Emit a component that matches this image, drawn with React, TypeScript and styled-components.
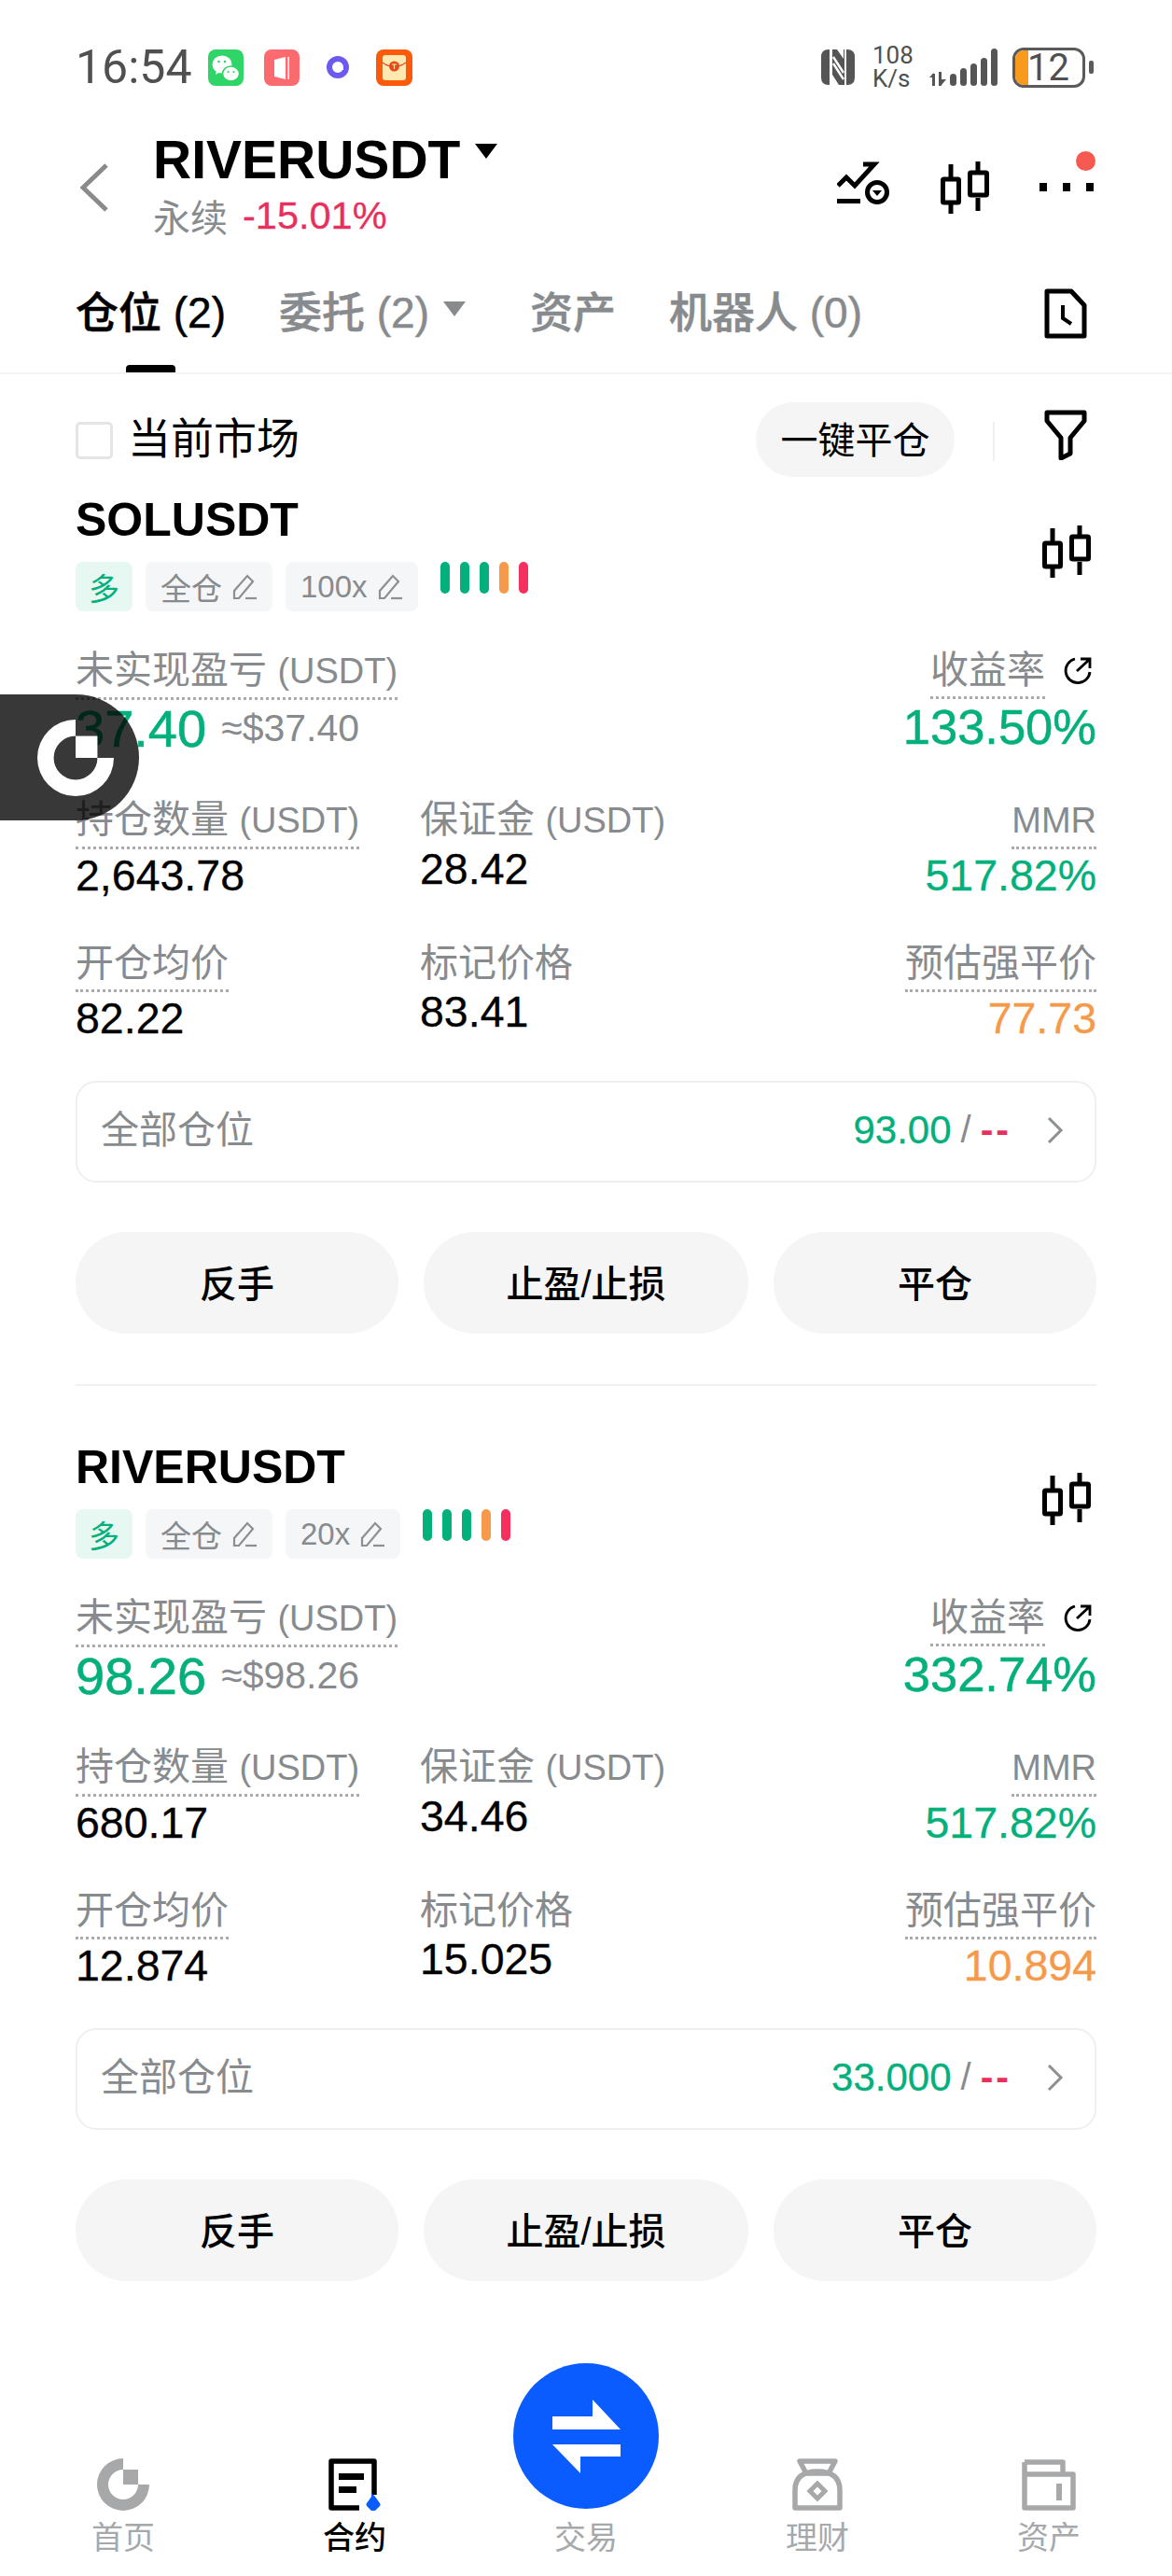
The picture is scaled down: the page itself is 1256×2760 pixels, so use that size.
import React from "react";
import styled, { createGlobalStyle } from "styled-components";

const FONT = `"Liberation Sans", "Noto Sans CJK SC", sans-serif`;
const GREEN = "#03b07c";
const RED = "#e7305e";
const ORANGE = "#f59a4a";
const GREY = "#888b8e";
const NAVGREY = "#a6a8aa";

const Global = createGlobalStyle`
  html, body { margin: 0; padding: 0; background: #fff; }
  * { box-sizing: border-box; }
  svg { display: block; flex: none; }
`;

const Page = styled.div`
  position: relative;
  width: 1256px;
  height: 2760px;
  overflow: hidden;
  background: #fff;
  font-family: ${FONT};
  color: #000;
  display: flex;
  flex-direction: column;
  & > * {
    flex: none;
  }
`;

/* status bar */
const StatusBar = styled.div`
  height: 144px;
  padding: 0 84px 0 81px;
  display: flex;
  align-items: center;
  justify-content: space-between;
`;
const StatusGroup = styled.div`
  display: flex;
  align-items: center;
`;
const Clock = styled.span`
  font-family: Roboto, sans-serif;
  font-size: 50px;
  line-height: 50px;
  color: #505050;
  margin-right: 16px;
  width: 126px;
`;
const NotifySlot = styled.span<{ $inset?: number }>`
  width: 60px;
  padding-left: ${(p) => p.$inset ?? 0}px;
  display: flex;
  justify-content: flex-start;
`;
const Speed = styled.div`
  width: 61px;
  margin-left: 19px;
  font-family: Roboto, sans-serif;
  font-size: 26px;
  line-height: 25px;
  color: #505050;
`;
const Battery = styled.div`
  position: relative;
  width: 78px;
  height: 43px;
  margin-left: 16px;
  border: 3px solid #5a5a5a;
  border-radius: 12px;
  display: flex;
  align-items: center;
  justify-content: flex-end;
  padding-right: 14px;
  font-family: Roboto, sans-serif;
  font-size: 40px;
  line-height: 37px;
  color: #505050;
`;
const BatteryFill = styled.span`
  position: absolute;
  left: 0;
  top: 0;
  bottom: 0;
  width: 14px;
  border-radius: 9px 0 0 9px;
  background: #f79a1e;
`;
const BatteryNub = styled.span`
  width: 5px;
  height: 14px;
  margin-left: 4px;
  border-radius: 2px;
  background: #5a5a5a;
`;

/* navigation */
const Nav = styled.div`
  height: 126px;
  padding: 0 82px 0 86px;
  display: flex;
  align-items: flex-start;
`;
const Back = styled.div`
  width: 78px;
  padding-top: 31px;
`;
const NavTitleCol = styled.div`
  flex: 1;
`;
const TitleRow = styled.div`
  display: flex;
  align-items: flex-start;
  height: 54px;
`;
const Title = styled.span`
  font-size: 57px;
  line-height: 54px;
  font-weight: 700;
`;
const TitleCaret = styled.span`
  width: 0;
  height: 0;
  margin: 10px 0 0 16px;
  border-left: 12px solid transparent;
  border-right: 12px solid transparent;
  border-top: 16px solid #000;
`;
const SubRow = styled.div`
  display: flex;
  align-items: center;
  margin-top: 8px;
  height: 50px;
`;
const SubLabel = styled.span`
  font-size: 40px;
  color: ${GREY};
  margin-right: 16px;
`;
const SubChange = styled.span`
  font-size: 41.5px;
  color: ${RED};
  -webkit-text-stroke: 0.3px ${RED};
`;
const NavIcons = styled.div`
  position: relative;
  display: flex;
  align-items: flex-start;
  gap: 54px;
  padding-top: 29px;
`;
const MoreDots = styled.div`
  display: flex;
  gap: 17px;
  margin-top: 23px;
  width: 60px;
`;
const MoreDot = styled.span`
  width: 8px;
  height: 9px;
  background: #000;
`;
const RedDot = styled.span`
  position: absolute;
  right: 0;
  top: 18px;
  width: 21px;
  height: 21px;
  border-radius: 50%;
  background: #f5594f;
`;

/* tabs */
const TabBar = styled.div`
  height: 131px;
  padding: 0 91px 0 81px;
  border-bottom: 2px solid #f4f4f4;
  display: flex;
  align-items: flex-start;
`;
const Tab = styled.div<{ $active?: boolean; $gap: number }>`
  position: relative;
  display: flex;
  align-items: center;
  height: 129px;
  padding-bottom: 8px;
  margin-right: ${(p) => p.$gap}px;
  font-size: 46px;
  font-weight: 500;
  -webkit-text-stroke: 0.5px currentColor;
  color: ${(p) => (p.$active ? "#000" : GREY)};
  white-space: pre;
`;
const TabMark = styled.span`
  position: absolute;
  left: 54px;
  bottom: 0;
  width: 53px;
  height: 8px;
  border-radius: 4px 4px 0 0;
  background: #000;
`;
const TabCaret = styled.span`
  width: 0;
  height: 0;
  margin-left: 15px;
  border-left: 12px solid transparent;
  border-right: 12px solid transparent;
  border-top: 16px solid ${GREY};
`;
const TabEnd = styled.div`
  margin-left: auto;
  padding-top: 39px;
`;

/* toolbar */
const Toolbar = styled.div`
  height: 131px;
  padding: 30px 91px 0 81px;
  display: flex;
  align-items: flex-start;
`;
const Check = styled.span`
  width: 40px;
  height: 40px;
  margin-top: 21px;
  border: 3px solid #e3e5e6;
  border-radius: 5px;
`;
const CheckLabel = styled.span`
  margin-left: 16px;
  margin-top: 9px;
  font-size: 46px;
  line-height: 60px;
  flex: 1;
`;
const CloseAll = styled.div`
  width: 213px;
  height: 80px;
  padding-bottom: 4px;
  border-radius: 40px;
  background: #f5f5f5;
  font-size: 40px;
  display: flex;
  align-items: center;
  justify-content: center;
`;
const VLine = styled.span`
  width: 2px;
  height: 42px;
  margin: 21px 53px 0 41px;
  background: #f0f0f0;
`;
const FilterWrap = styled.div`
  padding-top: 8px;
`;

/* position card */
const Card = styled.section<{ $divider?: boolean }>`
  margin: 0 81px;
  padding-bottom: ${(p) => (p.$divider ? 54 : 0)}px;
  ${(p) => p.$divider && "border-bottom: 2px solid #f2f2f2; margin-bottom: 62px;"}
`;
const CardHead = styled.div`
  display: flex;
  justify-content: space-between;
  align-items: flex-start;
`;
const Symbol = styled.div`
  font-size: 50px;
  line-height: 50px;
  font-weight: 700;
`;
const TagRow = styled.div`
  display: flex;
  align-items: flex-start;
  gap: 14px;
  margin-top: 20px;
`;
const Tag = styled.span<{ $long?: boolean }>`
  height: 53px;
  padding: 0 ${(p) => (p.$long ? 14 : 16)}px;
  border-radius: 8px;
  display: flex;
  align-items: center;
  gap: 10px;
  font-size: 33px;
  background: ${(p) => (p.$long ? "#e6f8f1" : "#f5f6f7")};
  color: ${(p) => (p.$long ? GREEN : GREY)};
`;
const Bars = styled.div`
  display: flex;
  gap: 11px;
  margin-left: 10px;
`;
const Bar = styled.span<{ $color: string }>`
  width: 10px;
  height: 34px;
  border-radius: 5px;
  background: ${(p) => p.$color};
`;
const CandleWrap = styled.div`
  margin-top: 31px;
  margin-right: 6px;
`;
const PnlRow = styled.div`
  display: flex;
  justify-content: space-between;
  margin-top: 39px;
`;
const Metrics = styled.div`
  display: grid;
  grid-template-columns: 369px 1fr auto;
  row-gap: 42px;
  margin-top: 44px;
`;
const Cell = styled.div<{ $right?: boolean }>`
  display: flex;
  flex-direction: column;
  align-items: ${(p) => (p.$right ? "flex-end" : "flex-start")};
`;
const Label = styled.span<{ $dotted?: boolean }>`
  font-size: 41px;
  line-height: 48px;
  color: ${GREY};
  padding-bottom: ${(p) => (p.$dotted ? 4 : 0)}px;
  ${(p) => p.$dotted && `border-bottom: 3px dotted #a9abad;`}
`;
const Unit = styled.span`
  font-size: 38px;
`;
const LabelRow = styled.div`
  display: flex;
  align-items: flex-start;
  gap: 19px;
`;
const RefreshWrap = styled.span`
  margin-top: 9px;
  margin-right: 5px;
`;
const Value = styled.span<{ $tone?: string }>`
  font-size: 46.5px;
  line-height: 56px;
  color: ${(p) => p.$tone ?? "#000"};
  -webkit-text-stroke: 0.3px ${(p) => p.$tone ?? "#000"};
`;
const BigValue = styled.span`
  font-size: 52.5px;
  line-height: 60px;
  color: ${GREEN};
  -webkit-text-stroke: 0.5px ${GREEN};
`;
const PnlLine = styled.div`
  display: flex;
  align-items: center;
  gap: 16px;
  height: 60px;
`;
const PnlBig = styled.span`
  font-size: 56px;
  color: ${GREEN};
  -webkit-text-stroke: 0.6px ${GREEN};
`;
const PnlFiat = styled.span`
  font-size: 41px;
  color: ${GREY};
`;
const AllRow = styled.div`
  height: 109px;
  margin-top: 39px;
  padding: 0 33px 4px 25px;
  border: 2px solid #efefef;
  border-radius: 22px;
  display: flex;
  align-items: center;
  font-size: 41px;
  color: ${GREY};
`;
const AllLabel = styled.span`
  flex: 1;
  margin-bottom: 8px;
`;
const AllQty = styled.span`
  color: ${GREEN};
  font-size: 42px;
  -webkit-text-stroke: 0.3px ${GREEN};
`;
const AllSep = styled.span`
  margin: 0 10px;
  font-size: 40px;
`;
const AllDash = styled.span`
  color: ${RED};
  font-weight: 700;
  letter-spacing: 3px;
  margin-right: 38px;
`;
const Actions = styled.div`
  display: grid;
  grid-template-columns: 346px 348px 346px;
  justify-content: space-between;
  margin-top: 53px;
`;
const Action = styled.div`
  height: 109px;
  padding-bottom: 4px;
  border-radius: 55px;
  background: #f5f5f5;
  font-size: 40px;
  font-weight: 500;
  display: flex;
  align-items: center;
  justify-content: center;
`;

/* floating handle */
const FloatHandle = styled.div`
  position: absolute;
  left: 0;
  top: 744px;
  width: 149px;
  height: 135px;
  border-radius: 0 68px 68px 0;
  background: rgba(0, 0, 0, 0.78);
  display: flex;
  align-items: center;
  padding-left: 40px;
`;

/* bottom nav */
const BottomNav = styled.nav`
  margin-top: auto;
  height: 228px;
  padding: 0 8px 21px;
  display: grid;
  grid-template-columns: repeat(5, 1fr);
  align-items: end;
`;
const NavItem = styled.div<{ $active?: boolean }>`
  display: flex;
  flex-direction: column;
  align-items: center;
  font-size: 34px;
  line-height: 40px;
  color: ${(p) => (p.$active ? "#000" : NAVGREY)};
  font-weight: ${(p) => (p.$active ? 500 : 400)};
`;
const NavIconBox = styled.div`
  height: 56px;
  margin-bottom: 9px;
  display: flex;
  align-items: center;
  justify-content: center;
`;
const SwapCircle = styled.div`
  width: 156px;
  height: 156px;
  margin-bottom: 11px;
  border-radius: 50%;
  background: #0a5cff;
  display: flex;
  align-items: center;
  justify-content: center;
`;

/* ---------- drawings ---------- */
const WeChat = () => (
  <svg width="38" height="39" viewBox="0 0 38 39">
    <rect width="38" height="39" rx="8" fill="#2fd566" />
    <ellipse cx="15" cy="16" rx="10.5" ry="9.5" fill="#fff" />
    <path d="M9 22l-1 5 5-3z" fill="#fff" />
    <ellipse cx="24.5" cy="26" rx="9" ry="8" fill="#fff" stroke="#2fd566" strokeWidth="1.5" />
    <circle cx="11.5" cy="13" r="1.3" fill="#2fd566" />
    <circle cx="18" cy="13" r="1.3" fill="#2fd566" />
    <circle cx="21.5" cy="24" r="1.1" fill="#2fd566" />
    <circle cx="27.5" cy="24" r="1.1" fill="#2fd566" />
  </svg>
);
const RedApp = () => (
  <svg width="38" height="39" viewBox="0 0 38 39">
    <rect width="38" height="39" rx="8" fill="#fb6a6e" />
    <path d="M11 11l12-3v24l-12-3z" fill="#fff" />
    <rect x="25.5" y="8" width="1.5" height="24" fill="#fff" />
  </svg>
);
const PurpleRing = () => (
  <svg width="24" height="24" viewBox="0 0 24 24">
    <circle cx="12" cy="12" r="9" fill="none" stroke="#6a5af0" strokeWidth="6" />
    <path d="M12 12h6v3h-6z" fill="#fff" />
  </svg>
);
const Envelope = () => (
  <svg width="39" height="39" viewBox="0 0 39 39">
    <rect width="39" height="39" rx="8" fill="#fa5a0a" />
    <rect x="7" y="6" width="25" height="27" rx="3" fill="#ffe9b0" />
    <path d="M7 14q12 9 25 0" fill="none" stroke="#e8491a" strokeWidth="1.2" />
    <circle cx="19.5" cy="18" r="5.5" fill="#e8491a" />
    <path d="M17 16h5M19.5 16v5" stroke="#ffe9b0" strokeWidth="1.2" />
  </svg>
);
const Nfc = () => (
  <svg width="36" height="38" viewBox="0 0 36 38">
    <path d="M8 0h1v38H8q-8 0-8-8V8q0-8 8-8z" fill="#555" />
    <path d="M27 0h1q8 0 8 8v22q0 8-8 8h-1z" fill="#555" />
    <path d="M12 0h5l7 10v-10h1v38h-6L12 27z" fill="#555" />
    <path d="M13 8l11 17M13 15l11 17" stroke="#fff" strokeWidth="2.4" />
  </svg>
);
const Signal = () => (
  <svg width="73" height="41" viewBox="0 0 73 41">
    <g fill="#555">
      <rect x="3" y="27" width="3" height="13" />
      <path d="M0 31l4.500-5v5z" />
      <rect x="10" y="25" width="3" height="15" />
      <path d="M13 33h5l-5 6z" />
      <rect x="22" y="27" width="7" height="13" rx="3.500" />
      <rect x="33" y="21" width="7" height="19" rx="3.500" />
      <rect x="44" y="16" width="7" height="24" rx="3.500" />
      <rect x="55" y="10" width="7" height="30" rx="3.500" />
      <rect x="66" y="0" width="7" height="40" rx="3.500" />
    </g>
  </svg>
);
const BackChevron = () => (
  <svg width="30" height="52" viewBox="0 0 30 52">
    <path d="M28 2L3 26l25 24" fill="none" stroke="#8a8a8a" strokeWidth="5" />
  </svg>
);
const AlertIcon = () => (
  <svg width="57" height="47" viewBox="0 0 57 47">
    <g fill="none" stroke="#000" strokeWidth="5">
      <path d="M1 26l9-9 9 9L40 3H28" />
      <circle cx="43" cy="33" r="10.500" />
    </g>
    <path d="M0 40h25v5H0z" fill="#000" />
    <path d="M38 31h10l-5 6z" fill="#000" />
  </svg>
);
const Candles = () => (
  <svg width="52" height="56" viewBox="0 0 52 56">
    <g fill="none" stroke="#000" strokeWidth="5">
      <path d="M11 3v14M11 45v11" />
      <rect x="2.500" y="19" width="17" height="25" rx="1" />
      <path d="M40 0v12M40 39v14" />
      <rect x="31.500" y="12" width="18" height="24" rx="1" />
    </g>
  </svg>
);
const FileClock = () => (
  <svg width="46" height="54" viewBox="0 0 46 54">
    <path d="M3 3h26l14 15v33H3z" fill="none" stroke="#000" strokeWidth="5" strokeLinejoin="round" />
    <path d="M20 18v14l9 6" fill="none" stroke="#000" strokeWidth="4" />
  </svg>
);
const Filter = () => (
  <svg width="46" height="54" viewBox="0 0 46 54">
    <path
      d="M3 3h40v9L28 30v17l-10 5V30L3 12z"
      fill="none"
      stroke="#000"
      strokeWidth="5"
      strokeLinejoin="round"
    />
  </svg>
);
const Pencil = () => (
  <svg width="28" height="30" viewBox="0 0 28 30">
    <g fill="none" stroke="#8d9093" strokeWidth="2.200">
      <path d="M3 27V19L17 3l6 6L8 27z" />
      <path d="M15 27h12" />
    </g>
  </svg>
);
const Refresh = () => (
  <svg width="31" height="31" viewBox="0 0 31 31">
    <g fill="none" stroke="#000" strokeWidth="2.800">
      <path d="M13 3A13 13 0 1 0 29 17" />
      <path d="M15 16L28 4M19 3h10v10" />
    </g>
  </svg>
);
const ChevronRight = () => (
  <svg width="18" height="30" viewBox="0 0 18 30">
    <path d="M2 2l13 13L2 28" fill="none" stroke="#8d9093" strokeWidth="3" />
  </svg>
);
const Logo = ({ size, color }: { size: number; color: string }) => (
  <svg width={size} height={size} viewBox="0 0 56 56">
    <path d="M28 0A28 28 0 1 0 56 28H44A16 16 0 1 1 28 12Z" fill={color} />
    <rect x="28" y="12" width="16" height="16" fill={color} />
  </svg>
);
const ContractIcon = () => (
  <svg width="58" height="56" viewBox="0 0 58 56">
    <path d="M34 53H4V3h46v36" fill="none" stroke="#000" strokeWidth="5.500" strokeLinejoin="round" />
    <rect x="12" y="16" width="27" height="7" fill="#000" />
    <rect x="12" y="30" width="19" height="7" fill="#000" />
    <path d="M47 38q2 0 4 3l5 7q1 2 0 3l-5 5q-2 2-4 0l-5-5q-1-2 0-3l5-7q0-3 0-3z" fill="#0a5cff" />
  </svg>
);
const BagIcon = () => (
  <svg width="54" height="56" viewBox="0 0 54 56">
    <g fill="none" stroke={NAVGREY} strokeWidth="5.500" strokeLinejoin="round">
      <path d="M8 3h38l-7 13H15z" />
      <path d="M3 53V34Q3 14 27 14t24 20v19z" />
    </g>
    <path d="M27 27l8 8-8 8-8-8z" fill="none" stroke={NAVGREY} strokeWidth="5" />
  </svg>
);
const WalletIcon = () => (
  <svg width="58" height="55" viewBox="0 0 58 55">
    <g fill="none" stroke={NAVGREY} strokeWidth="5.500" strokeLinejoin="round">
      <path d="M3 3h41v13" />
      <path d="M3 3v49h52V16H3" />
    </g>
    <rect x="37" y="26" width="6" height="18" fill={NAVGREY} />
  </svg>
);
const SwapIcon = () => (
  <svg width="73" height="79" viewBox="0 0 73 79">
    <path d="M0 18H43V0L73 32H0Z" fill="#fff" />
    <path d="M0 48H73V61H30V79Z" fill="#fff" />
  </svg>
);

/* ---------- data ---------- */
type Position = {
  symbol: string;
  leverage: string;
  pnl: string;
  fiat: string;
  roe: string;
  qty: string;
  margin: string;
  entry: string;
  mark: string;
  liq: string;
  total: string;
};

const positions: Position[] = [
  {
    symbol: "SOLUSDT",
    leverage: "100x",
    pnl: "37.40",
    fiat: "≈$37.40",
    roe: "133.50%",
    qty: "2,643.78",
    margin: "28.42",
    entry: "82.22",
    mark: "83.41",
    liq: "77.73",
    total: "93.00",
  },
  {
    symbol: "RIVERUSDT",
    leverage: "20x",
    pnl: "98.26",
    fiat: "≈$98.26",
    roe: "332.74%",
    qty: "680.17",
    margin: "34.46",
    entry: "12.874",
    mark: "15.025",
    liq: "10.894",
    total: "33.000",
  },
];

const barColors = [GREEN, GREEN, GREEN, ORANGE, "#f5305e"];

const PositionCard = ({ p, divider }: { p: Position; divider?: boolean }) => (
  <Card $divider={divider}>
    <CardHead>
      <div>
        <Symbol>{p.symbol}</Symbol>
        <TagRow>
          <Tag $long>多</Tag>
          <Tag>
            全仓
            <Pencil />
          </Tag>
          <Tag>
            {p.leverage}
            <Pencil />
          </Tag>
          <Bars>
            {barColors.map((c, i) => (
              <Bar key={i} $color={c} />
            ))}
          </Bars>
        </TagRow>
      </div>
      <CandleWrap>
        <Candles />
      </CandleWrap>
    </CardHead>

    <PnlRow>
      <Cell>
        <Label $dotted>
          未实现盈亏 <Unit>(USDT)</Unit>
        </Label>
        <PnlLine>
          <PnlBig>{p.pnl}</PnlBig>
          <PnlFiat>{p.fiat}</PnlFiat>
        </PnlLine>
      </Cell>
      <Cell $right>
        <LabelRow>
          <Label $dotted>收益率</Label>
          <RefreshWrap>
            <Refresh />
          </RefreshWrap>
        </LabelRow>
        <BigValue>{p.roe}</BigValue>
      </Cell>
    </PnlRow>

    <Metrics>
      <Cell>
        <Label $dotted>
          持仓数量 <Unit>(USDT)</Unit>
        </Label>
        <Value>{p.qty}</Value>
      </Cell>
      <Cell>
        <Label>
          保证金 <Unit>(USDT)</Unit>
        </Label>
        <Value>{p.margin}</Value>
      </Cell>
      <Cell $right>
        <Label $dotted>
          <Unit>MMR</Unit>
        </Label>
        <Value $tone={GREEN}>517.82%</Value>
      </Cell>
      <Cell>
        <Label $dotted>开仓均价</Label>
        <Value>{p.entry}</Value>
      </Cell>
      <Cell>
        <Label>标记价格</Label>
        <Value>{p.mark}</Value>
      </Cell>
      <Cell $right>
        <Label $dotted>预估强平价</Label>
        <Value $tone={ORANGE}>{p.liq}</Value>
      </Cell>
    </Metrics>

    <AllRow>
      <AllLabel>全部仓位</AllLabel>
      <AllQty>{p.total}</AllQty>
      <AllSep>/</AllSep>
      <AllDash>--</AllDash>
      <ChevronRight />
    </AllRow>

    <Actions>
      <Action>反手</Action>
      <Action>止盈/止损</Action>
      <Action>平仓</Action>
    </Actions>
  </Card>
);

export default function App() {
  return (
    <Page>
      <Global />
      <StatusBar>
        <StatusGroup>
          <Clock>16:54</Clock>
          <NotifySlot>
            <WeChat />
          </NotifySlot>
          <NotifySlot>
            <RedApp />
          </NotifySlot>
          <NotifySlot $inset={7}>
            <PurpleRing />
          </NotifySlot>
          <Envelope />
        </StatusGroup>
        <StatusGroup>
          <Nfc />
          <Speed>
            108
            <br />
            K/s
          </Speed>
          <Signal />
          <Battery>
            <BatteryFill />
            12
          </Battery>
          <BatteryNub />
        </StatusGroup>
      </StatusBar>

      <Nav>
        <Back>
          <BackChevron />
        </Back>
        <NavTitleCol>
          <TitleRow>
            <Title>RIVERUSDT</Title>
            <TitleCaret />
          </TitleRow>
          <SubRow>
            <SubLabel>永续</SubLabel>
            <SubChange>-15.01%</SubChange>
          </SubRow>
        </NavTitleCol>
        <NavIcons>
          <AlertIcon />
          <Candles />
          <MoreDots>
            <MoreDot />
            <MoreDot />
            <MoreDot />
          </MoreDots>
          <RedDot />
        </NavIcons>
      </Nav>

      <TabBar>
        <Tab $active $gap={57}>
          仓位 (2)
          <TabMark />
        </Tab>
        <Tab $gap={69}>
          委托 (2)
          <TabCaret />
        </Tab>
        <Tab $gap={57}>资产</Tab>
        <Tab $gap={0}>机器人 (0)</Tab>
        <TabEnd>
          <FileClock />
        </TabEnd>
      </TabBar>

      <Toolbar>
        <Check />
        <CheckLabel>当前市场</CheckLabel>
        <CloseAll>一键平仓</CloseAll>
        <VLine />
        <FilterWrap>
          <Filter />
        </FilterWrap>
      </Toolbar>

      {positions.map((p, i) => (
        <PositionCard key={p.symbol} p={p} divider={i === 0} />
      ))}

      <BottomNav>
        <NavItem>
          <NavIconBox>
            <Logo size={56} color={NAVGREY} />
          </NavIconBox>
          首页
        </NavItem>
        <NavItem $active>
          <NavIconBox>
            <ContractIcon />
          </NavIconBox>
          合约
        </NavItem>
        <NavItem>
          <SwapCircle>
            <SwapIcon />
          </SwapCircle>
          交易
        </NavItem>
        <NavItem>
          <NavIconBox>
            <BagIcon />
          </NavIconBox>
          理财
        </NavItem>
        <NavItem>
          <NavIconBox>
            <WalletIcon />
          </NavIconBox>
          资产
        </NavItem>
      </BottomNav>

      <FloatHandle>
        <Logo size={82} color="#fff" />
      </FloatHandle>
    </Page>
  );
}
